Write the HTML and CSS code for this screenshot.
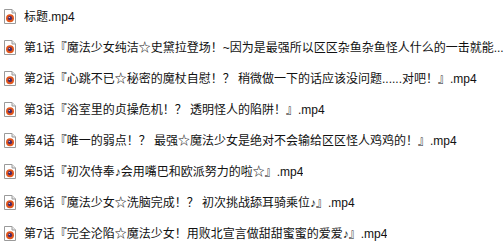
FILE: index.html
```html
<!DOCTYPE html>
<html lang="zh">
<head>
<meta charset="utf-8">
<link rel="stylesheet" href="styles.css">
</head>
<body>
<ul class="list">
  <li class="row"><svg class="ico" viewBox="0 0 12 15"><path d="M0.5 0.5H8L11.5 4V14.5H0.5Z" fill="#fff" stroke="#9a9a9a"/><path d="M8 0.5V4H11.5" fill="#e8e8e8" stroke="#9a9a9a"/><circle cx="6" cy="9.2" r="4" fill="#e2561b"/><circle cx="6" cy="9.2" r="2.1" fill="#4a2a6a"/><circle cx="5.3" cy="8.5" r="0.6" fill="#fff"/></svg><span class="name">标题.mp4</span></li>
  <li class="row"><svg class="ico" viewBox="0 0 12 15"><path d="M0.5 0.5H8L11.5 4V14.5H0.5Z" fill="#fff" stroke="#9a9a9a"/><path d="M8 0.5V4H11.5" fill="#e8e8e8" stroke="#9a9a9a"/><circle cx="6" cy="9.2" r="4" fill="#e2561b"/><circle cx="6" cy="9.2" r="2.1" fill="#4a2a6a"/><circle cx="5.3" cy="8.5" r="0.6" fill="#fff"/></svg><span class="name">第1话『魔法少女纯洁☆史黛拉登场！~因为是最强所以区区杂鱼杂鱼怪人什么的一击就能...</span></li>
  <li class="row"><svg class="ico" viewBox="0 0 12 15"><path d="M0.5 0.5H8L11.5 4V14.5H0.5Z" fill="#fff" stroke="#9a9a9a"/><path d="M8 0.5V4H11.5" fill="#e8e8e8" stroke="#9a9a9a"/><circle cx="6" cy="9.2" r="4" fill="#e2561b"/><circle cx="6" cy="9.2" r="2.1" fill="#4a2a6a"/><circle cx="5.3" cy="8.5" r="0.6" fill="#fff"/></svg><span class="name">第2话『心跳不已☆秘密的魔杖自慰！？ 稍微做一下的话应该没问题......对吧！』.mp4</span></li>
  <li class="row"><svg class="ico" viewBox="0 0 12 15"><path d="M0.5 0.5H8L11.5 4V14.5H0.5Z" fill="#fff" stroke="#9a9a9a"/><path d="M8 0.5V4H11.5" fill="#e8e8e8" stroke="#9a9a9a"/><circle cx="6" cy="9.2" r="4" fill="#e2561b"/><circle cx="6" cy="9.2" r="2.1" fill="#4a2a6a"/><circle cx="5.3" cy="8.5" r="0.6" fill="#fff"/></svg><span class="name">第3话『浴室里的贞操危机！？ 透明怪人的陷阱！』.mp4</span></li>
  <li class="row"><svg class="ico" viewBox="0 0 12 15"><path d="M0.5 0.5H8L11.5 4V14.5H0.5Z" fill="#fff" stroke="#9a9a9a"/><path d="M8 0.5V4H11.5" fill="#e8e8e8" stroke="#9a9a9a"/><circle cx="6" cy="9.2" r="4" fill="#e2561b"/><circle cx="6" cy="9.2" r="2.1" fill="#4a2a6a"/><circle cx="5.3" cy="8.5" r="0.6" fill="#fff"/></svg><span class="name">第4话『唯一的弱点！？ 最强☆魔法少女是绝对不会输给区区怪人鸡鸡的！』.mp4</span></li>
  <li class="row"><svg class="ico" viewBox="0 0 12 15"><path d="M0.5 0.5H8L11.5 4V14.5H0.5Z" fill="#fff" stroke="#9a9a9a"/><path d="M8 0.5V4H11.5" fill="#e8e8e8" stroke="#9a9a9a"/><circle cx="6" cy="9.2" r="4" fill="#e2561b"/><circle cx="6" cy="9.2" r="2.1" fill="#4a2a6a"/><circle cx="5.3" cy="8.5" r="0.6" fill="#fff"/></svg><span class="name">第5话『初次侍奉♪会用嘴巴和欧派努力的啦☆』.mp4</span></li>
  <li class="row"><svg class="ico" viewBox="0 0 12 15"><path d="M0.5 0.5H8L11.5 4V14.5H0.5Z" fill="#fff" stroke="#9a9a9a"/><path d="M8 0.5V4H11.5" fill="#e8e8e8" stroke="#9a9a9a"/><circle cx="6" cy="9.2" r="4" fill="#e2561b"/><circle cx="6" cy="9.2" r="2.1" fill="#4a2a6a"/><circle cx="5.3" cy="8.5" r="0.6" fill="#fff"/></svg><span class="name">第6话『魔法少女☆洗脑完成！？ 初次挑战舔耳骑乘位♪』.mp4</span></li>
  <li class="row"><svg class="ico" viewBox="0 0 12 15"><path d="M0.5 0.5H8L11.5 4V14.5H0.5Z" fill="#fff" stroke="#9a9a9a"/><path d="M8 0.5V4H11.5" fill="#e8e8e8" stroke="#9a9a9a"/><circle cx="6" cy="9.2" r="4" fill="#e2561b"/><circle cx="6" cy="9.2" r="2.1" fill="#4a2a6a"/><circle cx="5.3" cy="8.5" r="0.6" fill="#fff"/></svg><span class="name">第7话『完全沦陷☆魔法少女！用败北宣言做甜甜蜜蜜的爱爱♪』.mp4</span></li>
</ul>
</body>
</html>
```
FILE: styles.css
```css
html, body {
  margin: 0;
  padding: 0;
  background: #ffffff;
}
body {
  width: 504px;
  height: 251px;
  overflow: hidden;
  font-family: "Liberation Sans", "Noto Sans CJK SC", sans-serif;
  font-size: 12px;
  color: #111111;
}
.list {
  list-style: none;
  margin: 0;
  padding: 1px 0 0 0;
}
.row {
  height: 31px;
  display: flex;
  align-items: center;
  padding-left: 4px;
  white-space: nowrap;
  overflow: hidden;
}
.ico {
  width: 12px;
  height: 15px;
  flex: none;
  margin-right: 8px;
}
.name {
  line-height: 16px;
  min-width: 0;
  overflow: hidden;
}
```
